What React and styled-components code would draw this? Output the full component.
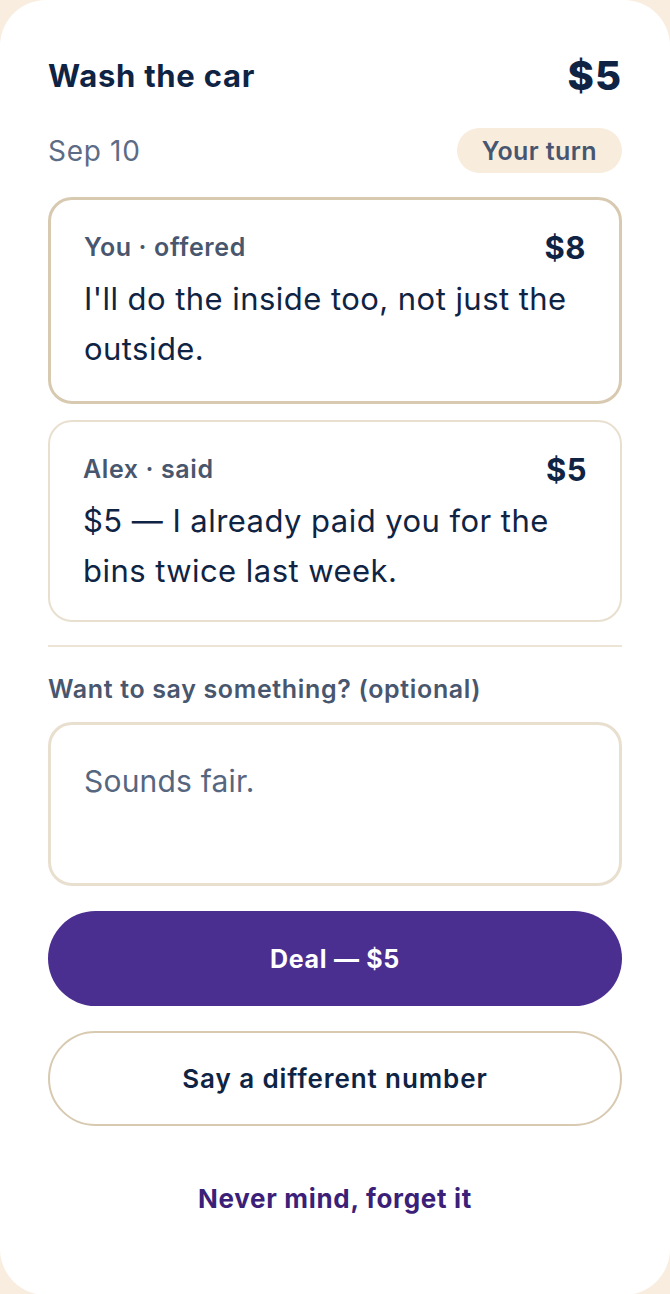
import React from "react";
import styled, { createGlobalStyle } from "styled-components";

const Global = createGlobalStyle`
  html, body {
    margin: 0;
    padding: 0;
    background: #f9ede0;
  }
  body {
    font-family: Inter, "Noto Sans", "Liberation Sans", sans-serif;
    -webkit-font-smoothing: antialiased;
  }
  * { box-sizing: border-box; }
`;

const Sheet = styled.main`
  background: #ffffff;
  border-radius: 46px;
  min-height: 1294px;
  padding: 52px 48px 49px;
  display: flex;
  flex-direction: column;
`;

const HeaderRow = styled.div`
  display: flex;
  align-items: center;
  justify-content: space-between;
  height: 46px;
`;

const Title = styled.h1`
  margin: 0;
  font-size: 31px;
  font-weight: 700;
  color: #0f2444;
  letter-spacing: 0.75px;
`;

const Price = styled.div`
  font-size: 40px;
  font-weight: 800;
  color: #0f2444;
  letter-spacing: 1px;
`;

const MetaRow = styled.div`
  display: flex;
  align-items: center;
  justify-content: space-between;
  margin-top: 30px;
`;

const DateText = styled.span`
  font-size: 28px;
  letter-spacing: 0.7px;
  color: #5d6c86;
`;

const Badge = styled.span`
  display: inline-flex;
  align-items: center;
  height: 45px;
  padding: 0 25px;
  border-radius: 999px;
  background: #f8ecdc;
  color: #475670;
  font-size: 25px;
  font-weight: 600;
  letter-spacing: 0.4px;
`;

const Thread = styled.div`
  display: flex;
  flex-direction: column;
  gap: 16px;
  margin-top: 24px;
`;

const Bubble = styled.section`
  border: ${(p) => (p.$mine ? "3px solid #d8cab1" : "2px solid #e9dfcf")};
  border-radius: 24px;
  padding: 31px 33px ${(p) => (p.$mine ? "27px" : "24px")};
  background: #fff;
`;

const BubbleHead = styled.div`
  display: flex;
  align-items: center;
  justify-content: space-between;
  height: 32px;
  margin-bottom: 11px;
`;

const Who = styled.span`
  font-size: 25px;
  font-weight: 600;
  letter-spacing: 0.6px;
  color: #48566e;
`;

const Amount = styled.span`
  font-size: 31px;
  font-weight: 700;
  letter-spacing: 0.5px;
  color: #0f2444;
`;

const Message = styled.p`
  margin: 0;
  font-size: 31px;
  line-height: 50px;
  letter-spacing: 0.45px;
  color: #0f2444;
`;

const Divider = styled.hr`
  border: 0;
  height: 2px;
  background: #ede4d6;
  margin: 23px 0 0;
`;

const FieldLabel = styled.label`
  display: block;
  margin-top: 28px;
  font-size: 25px;
  line-height: 28px;
  font-weight: 600;
  letter-spacing: 0.65px;
  color: #48566e;
`;

const NoteBox = styled.div`
  margin-top: 19px;
  height: 164px;
  border: 3px solid #e8dfcf;
  border-radius: 24px;
  padding: 31px 33px;
  font-size: 30px;
  line-height: 50px;
  letter-spacing: 0.2px;
  color: #56667f;
`;

const Actions = styled.div`
  display: flex;
  flex-direction: column;
  gap: 25px;
  margin-top: 25px;
`;

const Button = styled.button`
  height: 95px;
  width: 100%;
  border-radius: 999px;
  font-family: inherit;
  cursor: pointer;
  ${(p) =>
    p.$variant === "primary"
      ? `background: #4a2e90; color: #ffffff; border: 0; font-weight: 700; font-size: 25px; letter-spacing: 0.7px;`
      : p.$variant === "outline"
      ? `background: #ffffff; color: #0f2444; border: 2px solid #d8cab1; font-weight: 600; font-size: 26px; letter-spacing: 0.9px;`
      : `background: transparent; color: #3b1f78; border: 0; font-weight: 700; font-size: 26px; letter-spacing: 0.7px;`}
`;

export default function App() {
  return (
    <>
      <Global />
      <Sheet>
        <HeaderRow>
          <Title>Wash the car</Title>
          <Price>$5</Price>
        </HeaderRow>
        <MetaRow>
          <DateText>Sep 10</DateText>
          <Badge>Your turn</Badge>
        </MetaRow>
        <Thread>
          <Bubble $mine>
            <BubbleHead>
              <Who>You · offered</Who>
              <Amount>$8</Amount>
            </BubbleHead>
            <Message>I'll do the inside too, not just the outside.</Message>
          </Bubble>
          <Bubble>
            <BubbleHead>
              <Who>Alex · said</Who>
              <Amount>$5</Amount>
            </BubbleHead>
            <Message>$5 — I already paid you for the bins twice last week.</Message>
          </Bubble>
        </Thread>
        <Divider />
        <FieldLabel>Want to say something? (optional)</FieldLabel>
        <NoteBox>Sounds fair.</NoteBox>
        <Actions>
          <Button $variant="primary">Deal — $5</Button>
          <Button $variant="outline">Say a different number</Button>
          <Button $variant="text">Never mind, forget it</Button>
        </Actions>
      </Sheet>
    </>
  );
}
